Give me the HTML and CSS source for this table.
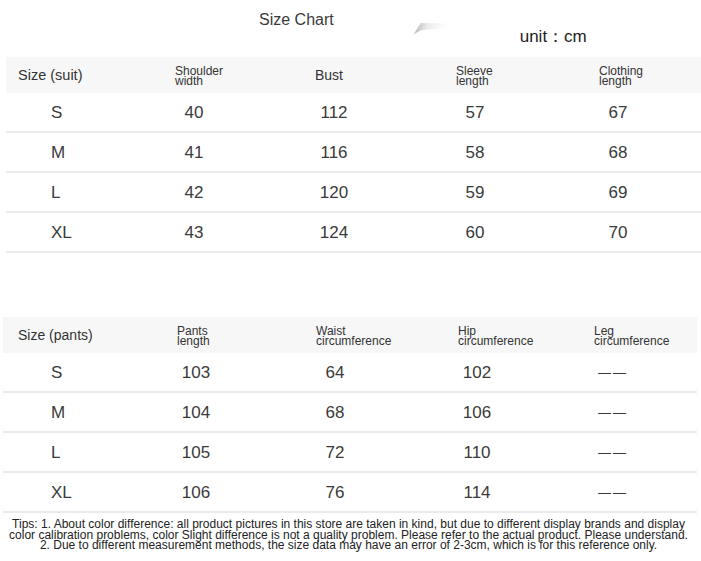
FILE: index.html
```html
<!DOCTYPE html>
<html>
<head>
<meta charset="utf-8">
<link rel="stylesheet" href="styles.css">
</head>
<body>
<div class="page">
  <div class="title-row">
    <div class="title">Size Chart</div>
    <div class="smudge"></div>
    <div class="unit">unit：cm</div>
  </div>

  <div class="chart suit">
    <div class="row head">
      <div class="h first">Size (suit)</div>
      <div class="h two">Shoulder<br>width</div>
      <div class="h">Bust</div>
      <div class="h two">Sleeve<br>length</div>
      <div class="h two">Clothing<br>length</div>
    </div>
    <div class="row"><div class="c first">S</div><div class="c">40</div><div class="c">112</div><div class="c">57</div><div class="c">67</div></div>
    <div class="row"><div class="c first">M</div><div class="c">41</div><div class="c">116</div><div class="c">58</div><div class="c">68</div></div>
    <div class="row"><div class="c first">L</div><div class="c">42</div><div class="c">120</div><div class="c">59</div><div class="c">69</div></div>
    <div class="row"><div class="c first">XL</div><div class="c">43</div><div class="c">124</div><div class="c">60</div><div class="c">70</div></div>
  </div>

  <div class="chart pants">
    <div class="row head">
      <div class="h first">Size (pants)</div>
      <div class="h two">Pants<br>length</div>
      <div class="h two">Waist<br>circumference</div>
      <div class="h two">Hip<br>circumference</div>
      <div class="h two">Leg<br>circumference</div>
    </div>
    <div class="row"><div class="c first">S</div><div class="c">103</div><div class="c">64</div><div class="c">102</div><div class="c dash">——</div></div>
    <div class="row"><div class="c first">M</div><div class="c">104</div><div class="c">68</div><div class="c">106</div><div class="c dash">——</div></div>
    <div class="row"><div class="c first">L</div><div class="c">105</div><div class="c">72</div><div class="c">110</div><div class="c dash">——</div></div>
    <div class="row"><div class="c first">XL</div><div class="c">106</div><div class="c">76</div><div class="c">114</div><div class="c dash">——</div></div>
  </div>

  <p class="tips">Tips: 1. About color difference: all product pictures in this store are taken in kind, but due to different display brands and display<br>color calibration problems, color Slight difference is not a quality problem. Please refer to the actual product. Please understand.<br>2. Due to different measurement methods, the size data may have an error of 2-3cm, which is for this reference only.</p>
</div>
</body>
</html>
```

FILE: styles.css
```css
html, body {
  margin: 0;
  padding: 0;
  background: #ffffff;
}

.page {
  width: 701px;
  height: 561px;
  overflow: hidden;
  font-family: "Liberation Sans", Arial, sans-serif;
  color: #333333;
}

.title-row {
  height: 57px;
  display: flex;
  align-items: flex-start;
}

.title {
  margin-left: 259px;
  margin-top: 11px;
  font-size: 16px;
  line-height: 18px;
  color: #3a3a3a;
}

.smudge {
  margin-left: 79px;
  margin-top: 23px;
  width: 41px;
  height: 12px;
  background: linear-gradient(100deg, rgba(200,200,200,0) 0%, rgba(190,190,190,0.9) 12%, rgba(225,225,225,0.6) 35%, rgba(245,245,245,0.3) 70%, rgba(255,255,255,0) 100%);
  clip-path: polygon(0 100%, 20% 0, 100% 0, 100% 40%, 20% 60%);
}

.unit {
  margin-left: 66px;
  margin-top: 27px;
  font-size: 17px;
  line-height: 20px;
  color: #222222;
}

.chart .row {
  display: grid;
  align-items: center;
  height: 38px;
  border-bottom: 2px solid #ebebeb;
}

.chart .row.head {
  height: 36px;
  background: #f7f7f7;
  border-bottom: none;
}

.suit {
  margin-left: 6px;
  width: 695px;
}

.suit .row {
  grid-template-columns: 169px 140px 141px 143px 1fr;
}

.pants {
  margin-left: 3px;
  width: 694px;
  margin-top: 64px;
}

.pants .row {
  grid-template-columns: 174px 139px 142px 136px 1fr;
}

.h {
  font-size: 14px;
  line-height: 16px;
  color: #333333;
}

.h.two {
  font-size: 12px;
  line-height: 10px;
  padding-top: 2px;
}

.suit .h.first {
  padding-left: 12px;
  font-size: 14.5px;
}

.pants .h.first {
  padding-left: 15px;
}

.c {
  width: 38px;
  text-align: center;
  font-size: 17px;
  line-height: 20px;
  padding-top: 2px;
  color: #3a3a3a;
}

.c.first {
  width: auto;
  text-align: left;
}

.suit .c.first {
  padding-left: 45px;
}

.pants .c.first {
  padding-left: 48px;
}

.c.dash {
  font-size: 13px;
  letter-spacing: 2px;
  white-space: nowrap;
}

.tips {
  margin: 6px 0 0 0;
  width: 697px;
  text-align: center;
  font-size: 12px;
  line-height: 10.5px;
  color: #222222;
}
```
